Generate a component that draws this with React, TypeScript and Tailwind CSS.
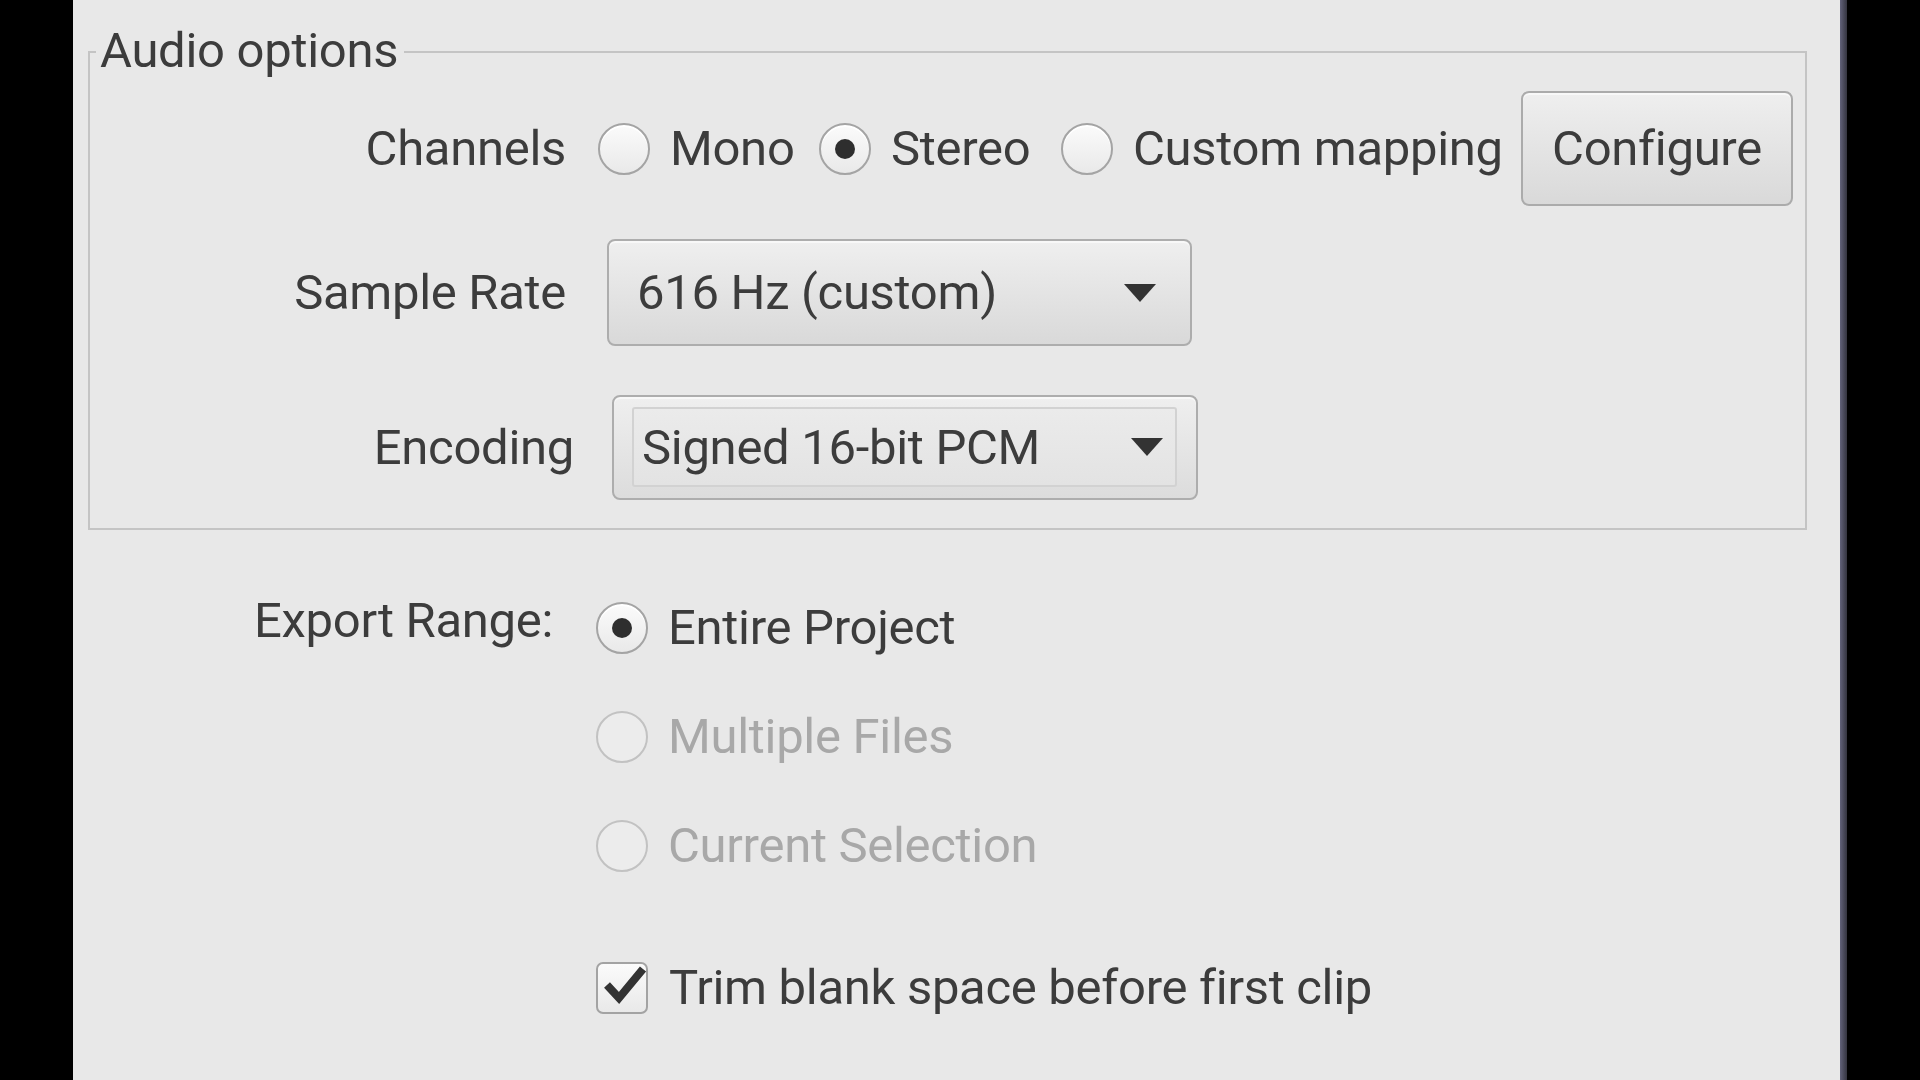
import clsx from "clsx";

function Radio({ checked, disabled }: { checked?: boolean; disabled?: boolean }) {
  return (
    <span
      className={clsx(
        "flex h-[52px] w-[52px] shrink-0 items-center justify-center rounded-full border-2",
        disabled
          ? "border-[#c2c2c2] bg-[#ececec]"
          : "border-[#a4a4a4] bg-linear-to-b from-[#fbfbfb] to-[#e9e9e9] shadow-[inset_0_2px_0_#ffffff]",
      )}
    >
      {checked && <span className="h-[20px] w-[20px] rounded-full bg-[#2e2e2e]" />}
    </span>
  );
}

function Arrow() {
  return (
    <svg viewBox="0 0 32 18" className="h-[18px] w-[32px] shrink-0">
      <polygon points="0,0 32,0 16,18" fill="#333333" />
    </svg>
  );
}

function RadioItem({
  label,
  checked,
  disabled,
  width,
}: {
  label: string;
  checked?: boolean;
  disabled?: boolean;
  width?: string;
}) {
  return (
    <div className={clsx("flex items-center", width)}>
      <Radio checked={checked} disabled={disabled} />
      <span className={clsx("ml-[20px] whitespace-nowrap", disabled && "text-[#a8a8a8]")}>{label}</span>
    </div>
  );
}

export default function App() {
  return (
    <div className="flex h-[1080px] w-[1920px] overflow-hidden bg-black font-['Roboto',sans-serif] text-[49px] leading-none tracking-[-0.3px] text-[#3c3c3c]">
      <div className="w-[73px] shrink-0 bg-black" />

      <div className="w-[1767px] shrink-0 bg-[#e8e8e8]">
        {/* Audio options frame */}
        <div className="relative ml-[15px] mt-[51px] h-[479px] w-[1719px] border-2 border-[#c4c4c4]">
          <span className="absolute left-[6px] top-[-28px] bg-[#e8e8e8] pl-[4px] pr-[6px] leading-[51px]">
            Audio options
          </span>

          <div className="mt-[38px] flex h-[115px] items-center">
            <div className="w-[476px] shrink-0 text-right">Channels</div>
            <div className="ml-[32px] flex items-center">
              <RadioItem label="Mono" width="w-[221px]" />
              <RadioItem label="Stereo" checked width="w-[242px]" />
              <RadioItem label="Custom mapping" width="w-[460px]" />
              <button className="flex h-[115px] w-[272px] items-center justify-center rounded-[8px] border-2 border-[#ababab] bg-linear-to-b from-[#efefef] to-[#d9d9d9] shadow-[inset_0_2px_0_#f8f8f8]">
                Configure
              </button>
            </div>
          </div>

          <div className="mt-[33px] flex h-[107px] items-center">
            <div className="w-[476px] shrink-0 text-right">Sample Rate</div>
            <div className="ml-[41px] flex h-[107px] w-[585px] items-center justify-between rounded-[8px] border-2 border-[#adadad] bg-linear-to-b from-[#efefef] to-[#d9d9d9] pl-[28px] pr-[34px] shadow-[inset_0_2px_0_#f8f8f8]">
              <span>616 Hz (custom)</span>
              <Arrow />
            </div>
          </div>

          <div className="mt-[49px] flex h-[105px] items-center">
            <div className="w-[484px] shrink-0 text-right">Encoding</div>
            <div className="ml-[38px] h-[105px] w-[586px] rounded-[8px] border-2 border-[#adadad] bg-linear-to-b from-[#efefef] to-[#dcdcdc] pl-[18px] pt-[10px] shadow-[inset_0_2px_0_#f8f8f8]">
              <div className="flex h-[80px] w-[545px] items-center justify-between rounded-[3px] border-2 border-[#d2d2d2] bg-linear-to-b from-[#ebebeb] to-[#e3e3e3] pl-[8px] pr-[12px]">
                <span>Signed 16-bit PCM</span>
                <Arrow />
              </div>
            </div>
          </div>
        </div>

        {/* Export range */}
        <div className="mt-[43px] flex">
          <div className="flex h-[109px] w-[480px] shrink-0 items-center justify-end pb-[14px]">Export Range:</div>
          <div className="ml-[43px] flex flex-col">
            <div className="flex h-[109px] items-center">
              <RadioItem label="Entire Project" checked />
            </div>
            <div className="flex h-[109px] items-center">
              <RadioItem label="Multiple Files" disabled />
            </div>
            <div className="flex h-[109px] items-center">
              <RadioItem label="Current Selection" disabled />
            </div>
            <div className="mt-[33px] flex h-[109px] items-center">
              <span className="relative h-[52px] w-[52px] shrink-0 rounded-[7px] border-2 border-[#a3a3a3] bg-linear-to-b from-[#fbfbfb] to-[#e9e9e9]">
                <svg viewBox="0 0 52 52" className="absolute left-[-2px] top-[-2px] h-[52px] w-[52px]">
                  <path d="M11 23 L23 36 L47 7" fill="none" stroke="#333333" strokeWidth="8" />
                </svg>
              </span>
              <span className="ml-[21px] whitespace-nowrap">Trim blank space before first clip</span>
            </div>
          </div>
        </div>
      </div>

      <div className="w-[7px] shrink-0 bg-linear-to-r from-[#62627a] to-[#34343f]" />
      <div className="flex-1 bg-black" />
    </div>
  );
}
